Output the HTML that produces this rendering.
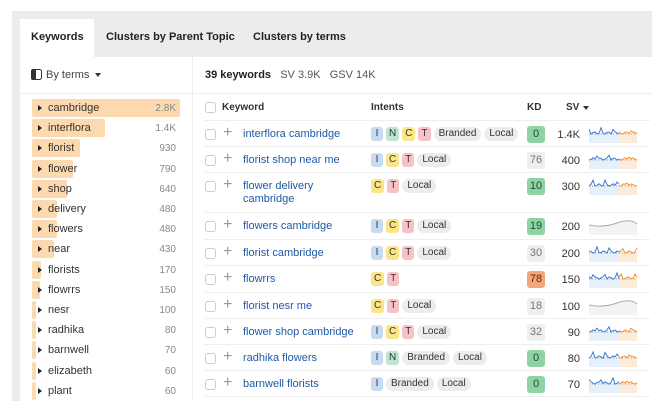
<!DOCTYPE html>
<html><head><meta charset="utf-8"><style>
*{margin:0;padding:0;box-sizing:border-box}
body{width:660px;height:418px;background:#fff;font-family:"Liberation Sans",sans-serif;position:relative;overflow:hidden;color:#333}
.a{position:absolute;white-space:nowrap}
.frame{left:12px;top:11px;width:640px;height:390px;background:#ebecee}
.panel{left:20px;top:57px;width:632px;height:344px;background:#fff}
.tab{font-size:11px;font-weight:bold;color:#222;top:31px}
.bar{background:#fcd9ae;height:18px;border-radius:2px}
.lt{font-size:11px;color:#333}
.ln{font-size:10px;color:#888;text-align:right;width:40px}
.tri{width:0;height:0;border-left:4px solid #222;border-top:3px solid transparent;border-bottom:3px solid transparent}
.cb{width:11px;height:11px;border:1px solid #ccc;border-radius:3px;background:#fff}
.plus{font-size:16px;color:#999;font-weight:300}
.kw{font-size:11px;color:#1f5aa6;line-height:13px}
.bd{display:inline-block;height:14px;line-height:14px;font-size:10px;padding:0 3px;border-radius:3px;margin-right:3px;color:#333;min-width:12px;text-align:center}
.I{background:#c7dcf2}.N{background:#bfe5d0}.C{background:#fbe58a}.T{background:#f6c2c6}
.p{background:#ececec;border-radius:8px;padding:0 5px}
.kd{width:18px;height:17px;line-height:17px;text-align:center;font-size:11px;border-radius:3px}
.g{background:#8fd3a5;color:#1d4d31}.n{background:#eeeeee;color:#777}.o{background:#f5a57a;color:#5a2a10}
.sv{font-size:11px;color:#333;text-align:right;width:36px}
.hl{height:1px;background:#eee;left:204px;width:446px}
</style></head><body>
<div class="a frame"></div>
<div class="a" style="left:20px;top:19px;width:74px;height:38px;background:#fff"></div>
<div class="a panel"></div>
<div class="a tab" style="left:31px">Keywords</div>
<div class="a tab" style="left:106px">Clusters by Parent Topic</div>
<div class="a tab" style="left:253px">Clusters by terms</div>
<div class="a" style="left:192px;top:57px;width:1px;height:344px;background:#eee"></div>
<div class="a" style="left:20px;top:93px;width:632px;height:1px;background:#eee"></div>
<svg class="a" style="left:31px;top:69px" width="11" height="11"><rect x="0.5" y="0.5" width="10" height="10" rx="2" fill="none" stroke="#333"/><rect x="0" y="0" width="5" height="11" rx="2" fill="#333"/></svg>
<div class="a" style="left:46px;top:69px;font-size:11px;color:#444">By terms</div>
<div class="a" style="left:95px;top:73px;border-top:4px solid #333;border-left:3px solid transparent;border-right:3px solid transparent"></div>
<div class="a" style="left:205px;top:69px;font-size:11px"><b style="color:#222">39 keywords</b> &nbsp; <span style="color:#555">SV 3.9K</span> &nbsp; <span style="color:#555">GSV 14K</span></div>
<div class="a" style="left:204px;top:120px;width:446px;height:1px;background:#eee"></div>
<div class="a cb" style="left:205px;top:102px"></div>
<div class="a" style="left:222px;top:102px;font-size:10px;font-weight:bold;color:#333">Keyword</div>
<div class="a" style="left:371px;top:102px;font-size:10px;font-weight:bold;color:#333">Intents</div>
<div class="a" style="left:527px;top:102px;font-size:10px;font-weight:bold;color:#333">KD</div>
<div class="a" style="left:566px;top:102px;font-size:10px;font-weight:bold;color:#333">SV</div>
<div class="a" style="left:583px;top:106px;border-top:4px solid #333;border-left:3px solid transparent;border-right:3px solid transparent"></div>
<div id="L"></div><div id="R"></div>
<script>
var L=[["cambridge","2.8K",148],["interflora","1.4K",73],["florist","930",48],["flower","790",41],["shop","640",35],["delivery","480",25],["flowers","480",25],["near","430",22],["florists","170",9],["flowrrs","150",8],["nesr","100",4],["radhika","80",4],["barnwell","70",4],["elizabeth","60",4],["plant","60",4]];
var h="";L.forEach(function(r,i){var y=99+i*20.2;
h+='<div class="a bar" style="left:32px;top:'+y+'px;width:'+r[2]+'px"></div><div class="a tri" style="left:38px;top:'+(y+6)+'px"></div><div class="a lt" style="left:48px;top:'+(y+3)+'px">'+r[0]+'</div><div class="a ln" style="left:136px;top:'+(y+4)+'px">'+r[1]+'</div>';});
document.getElementById("L").outerHTML=h;
var R=[["interflora cambridge","INCT",["Branded","Local"],"0","g","1.4K",120,26,1],
["florist shop near me","ICT",["Local"],"76","n","400",146,26,1],
["flower delivery<br>cambridge","CT",["Local"],"10","g","300",172,40,1],
["flowers cambridge","ICT",["Local"],"19","g","200",212,27,0],
["florist cambridge","ICT",["Local"],"30","n","200",239,26,1],
["flowrrs","CT",[],"78","o","150",265,27,1],
["florist nesr me","CT",["Local"],"18","n","100",292,26,0],
["flower shop cambridge","ICT",["Local"],"32","n","90",318,26,1],
["radhika flowers","IN",["Branded","Local"],"0","g","80",344,26,1],
["barnwell florists","I",["Branded","Local"],"0","g","70",370,26,1]];
h="";R.forEach(function(r,k){var t=r[6],y=t+(r[7]==40?8:8);
h+='<div class="a cb" style="left:205px;top:'+(y+1)+'px"></div><div class="a plus" style="left:223px;top:'+(y-4)+'px">+</div><div class="a kw" style="left:243px;top:'+y+'px">'+r[0]+'</div>';
var b="";r[1].split("").forEach(function(c){b+='<span class="bd '+c+'">'+c+'</span>'});r[2].forEach(function(p){b+='<span class="bd p">'+p+'</span>'});
h+='<div class="a" style="left:371px;top:'+(y-1)+'px;font-size:0">'+b+'</div>';
h+='<div class="a kd '+r[4]+'" style="left:527px;top:'+(y-2)+'px">'+r[3]+'</div><div class="a sv" style="left:544px;top:'+(y+1)+'px">'+r[5]+'</div>';
var sy=y-5,s;
if(r[8]){var pb="",po="";for(var i=0;i<=30;i+=2){var v=10+Math.sin(i*0.9+k)*1.2+((i+k*4)%12==0?-4:0);pb+=i+","+v.toFixed(1)+" ";}
for(var i=30;i<=48;i+=2){var v=10+Math.sin(i*0.8+k)*1.2+((i+k*2)%14==0?-3:0);po+=i+","+v.toFixed(1)+" ";}
s='<svg class="a" style="left:589px;top:'+sy+'px" width="50" height="20"><rect x="0" y="10" width="30" height="10" fill="#e6f0fb"/><rect x="30" y="10" width="18" height="10" fill="#fdebd9"/><line x1="0" y1="11" x2="48" y2="11" stroke="#888" stroke-dasharray="1,2" stroke-width="0.7"/><polyline points="'+pb+'" fill="none" stroke="#3a7bd5" stroke-width="1"/><polyline points="'+po+'" fill="none" stroke="#f0922e" stroke-width="1"/></svg>';}
else s='<svg class="a" style="left:589px;top:'+sy+'px" width="50" height="20"><path d="M0 10 Q14 13 28 8 T48 9 V20 H0Z" fill="#f3f3f3"/><path d="M0 10 Q14 13 28 8 T48 9" fill="none" stroke="#aaa" stroke-width="1"/></svg>';
h+=s+'<div class="a hl" style="top:'+(t+r[7])+'px"></div>';});
document.getElementById("R").outerHTML=h;
</script>
</body></html>
